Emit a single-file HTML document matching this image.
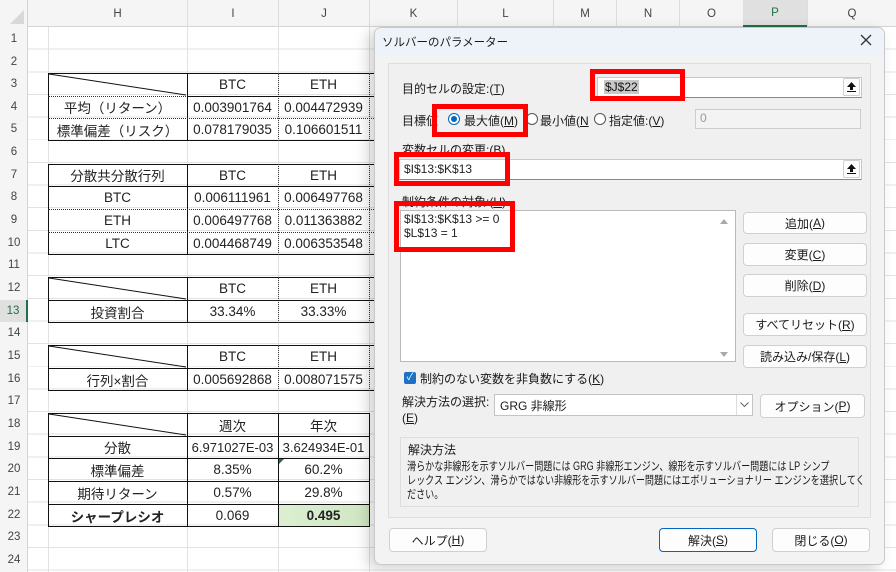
<!DOCTYPE html>
<html><head><meta charset="utf-8"><style>
*{box-sizing:border-box;margin:0;padding:0}
body{width:896px;height:572px;overflow:hidden;background:#fff;position:relative;font-family:"Liberation Sans","Noto Sans CJK JP",sans-serif;color:#222}
.a{position:absolute}
.c{position:absolute;display:flex;align-items:center;justify-content:center;font-size:13.5px;white-space:nowrap;color:#222}
.rh{position:absolute;left:0;width:28px;font-size:11.5px;color:#444;display:flex;align-items:center;justify-content:center}
.ch{position:absolute;top:0;height:27px;font-size:11.5px;color:#444;display:flex;align-items:center;justify-content:center}
.tb{position:absolute;border:1.5px solid #111}
.hl{position:absolute;height:0;border-top:1px solid #111}
.hd{position:absolute;height:0;border-top:1px dotted #333}
.vl{position:absolute;width:0;border-left:1px solid #111}
.vd{position:absolute;width:0;border-left:1px dotted #444}
.dl{font-size:12px;color:#1a1a1a;white-space:nowrap}
.btn{position:absolute;background:#fdfdfd;border:1px solid #d0d0d0;border-radius:4px;display:flex;align-items:center;justify-content:center;font-size:12px;color:#1a1a1a}
.inp{position:absolute;background:#fff;border:1px solid #c8c8c8;border-bottom:1px solid #888}
.red{position:absolute;border:5px solid #ff0000}
.u{text-decoration:underline}
.radio{position:absolute;width:12px;height:12px;border-radius:50%;border:1px solid #555;background:#fff}
</style></head><body>
<div class="a" style="left:28px;top:27px;width:868px;height:545px;background-image:repeating-linear-gradient(to bottom,transparent 0,transparent 21.65px,#e2e2e2 21.65px,#e2e2e2 22.65px)"></div>
<div class="a" style="left:48px;top:27px;width:1px;height:545px;background:#e2e2e2"></div>
<div class="a" style="left:187px;top:27px;width:1px;height:545px;background:#e2e2e2"></div>
<div class="a" style="left:278px;top:27px;width:1px;height:545px;background:#e2e2e2"></div>
<div class="a" style="left:369px;top:27px;width:1px;height:545px;background:#e2e2e2"></div>
<div class="a" style="left:0;top:0;width:896px;height:27px;background:#f5f5f5;border-bottom:1px solid #d4d4d4"></div>
<div class="a" style="left:0;top:0;width:28px;height:572px;background:#f5f5f5;border-right:1px solid #d4d4d4"></div>
<div class="a" style="left:10px;top:10px;width:0;height:0;border-left:14px solid transparent;border-bottom:14px solid #d8d8d8"></div>
<div class="ch" style="left:48px;width:139px">H</div>
<div class="ch" style="left:187px;width:91px;border-left:1px solid #ddd">I</div>
<div class="ch" style="left:278px;width:91px;border-left:1px solid #ddd">J</div>
<div class="ch" style="left:369px;width:88px;border-left:1px solid #ddd">K</div>
<div class="ch" style="left:457px;width:96px;border-left:1px solid #ddd">L</div>
<div class="ch" style="left:553px;width:63px;border-left:1px solid #ddd">M</div>
<div class="ch" style="left:616px;width:63px;border-left:1px solid #ddd">N</div>
<div class="ch" style="left:679px;width:64px;border-left:1px solid #ddd">O</div>
<div class="ch" style="left:743px;width:64px;background:#e0e0e0;border-bottom:2px solid #1e7145;color:#1e7145">P</div>
<div class="ch" style="left:807px;width:89px;border-left:1px solid #ddd">Q</div>
<div class="rh" style="top:28px;height:22px">1</div>
<div class="rh" style="top:51px;height:22px">2</div>
<div class="rh" style="top:73px;height:22px">3</div>
<div class="rh" style="top:96px;height:22px">4</div>
<div class="rh" style="top:118px;height:22px">5</div>
<div class="rh" style="top:141px;height:22px">6</div>
<div class="rh" style="top:164px;height:22px">7</div>
<div class="rh" style="top:186px;height:22px">8</div>
<div class="rh" style="top:209px;height:22px">9</div>
<div class="rh" style="top:232px;height:22px">10</div>
<div class="rh" style="top:254px;height:22px">11</div>
<div class="rh" style="top:277px;height:22px">12</div>
<div class="rh" style="top:300px;height:22px;background:#e0e0e0;color:#1e7145;border-right:2px solid #1e7145">13</div>
<div class="rh" style="top:322px;height:22px">14</div>
<div class="rh" style="top:345px;height:22px">15</div>
<div class="rh" style="top:368px;height:22px">16</div>
<div class="rh" style="top:390px;height:22px">17</div>
<div class="rh" style="top:413px;height:22px">18</div>
<div class="rh" style="top:436px;height:22px">19</div>
<div class="rh" style="top:458px;height:22px">20</div>
<div class="rh" style="top:481px;height:22px">21</div>
<div class="rh" style="top:504px;height:22px">22</div>
<div class="rh" style="top:526px;height:22px">23</div>
<div class="rh" style="top:549px;height:22px">24</div>

<svg class="a" style="left:0;top:0" width="380" height="572">
<g stroke="#111" stroke-width="1">
<line x1="49" y1="74" x2="186" y2="95"/>
<line x1="49" y1="278" x2="186" y2="299"/>
<line x1="49" y1="346" x2="186" y2="367"/>
<line x1="49" y1="414" x2="186" y2="435"/>
</g></svg>

<div class="tb" style="left:48px;top:73px;width:340px;height:68px"></div>
<div class="vl" style="left:187px;top:73px;height:68px"></div>
<div class="vd" style="left:278px;top:73px;height:68px"></div>
<div class="vd" style="left:369px;top:73px;height:68px"></div>
<div class="hd" style="left:48px;top:96px;width:140px"></div>
<div class="hl" style="left:187px;top:96px;width:200px"></div>
<div class="hd" style="left:48px;top:118px;width:330px"></div>
<div class="c" style="left:187px;top:73px;width:91px;height:23px">BTC</div>
<div class="c" style="left:278px;top:73px;width:91px;height:23px">ETH</div>
<div class="c" style="left:48px;top:96px;width:139px;height:22px">平均（リターン）</div>
<div class="c" style="left:187px;top:96px;width:91px;height:22px">0.003901764</div>
<div class="c" style="left:278px;top:96px;width:91px;height:22px">0.004472939</div>
<div class="c" style="left:48px;top:118px;width:139px;height:23px">標準偏差（リスク）</div>
<div class="c" style="left:187px;top:118px;width:91px;height:23px">0.078179035</div>
<div class="c" style="left:278px;top:118px;width:91px;height:23px">0.106601511</div>

<div class="tb" style="left:48px;top:164px;width:340px;height:91px"></div>
<div class="vl" style="left:187px;top:164px;height:91px"></div>
<div class="vd" style="left:278px;top:164px;height:91px"></div>
<div class="vd" style="left:369px;top:164px;height:91px"></div>
<div class="hl" style="left:48px;top:186px;width:340px"></div>
<div class="hd" style="left:48px;top:209px;width:330px"></div>
<div class="hd" style="left:48px;top:232px;width:330px"></div>
<div class="c" style="left:48px;top:164px;width:139px;height:22px">分散共分散行列</div>
<div class="c" style="left:187px;top:164px;width:91px;height:22px">BTC</div>
<div class="c" style="left:278px;top:164px;width:91px;height:22px">ETH</div>
<div class="c" style="left:48px;top:186px;width:139px;height:23px">BTC</div>
<div class="c" style="left:187px;top:186px;width:91px;height:23px">0.006111961</div>
<div class="c" style="left:278px;top:186px;width:91px;height:23px">0.006497768</div>
<div class="c" style="left:48px;top:209px;width:139px;height:23px">ETH</div>
<div class="c" style="left:187px;top:209px;width:91px;height:23px">0.006497768</div>
<div class="c" style="left:278px;top:209px;width:91px;height:23px">0.011363882</div>
<div class="c" style="left:48px;top:232px;width:139px;height:23px">LTC</div>
<div class="c" style="left:187px;top:232px;width:91px;height:23px">0.004468749</div>
<div class="c" style="left:278px;top:232px;width:91px;height:23px">0.006353548</div>

<div class="tb" style="left:48px;top:277px;width:340px;height:46px"></div>
<div class="vl" style="left:187px;top:277px;height:46px"></div>
<div class="vd" style="left:278px;top:277px;height:46px"></div>
<div class="vd" style="left:369px;top:277px;height:46px"></div>
<div class="hl" style="left:48px;top:300px;width:340px"></div>
<div class="c" style="left:187px;top:277px;width:91px;height:23px">BTC</div>
<div class="c" style="left:278px;top:277px;width:91px;height:23px">ETH</div>
<div class="c" style="left:48px;top:300px;width:139px;height:23px">投資割合</div>
<div class="c" style="left:187px;top:300px;width:91px;height:23px">33.34%</div>
<div class="c" style="left:278px;top:300px;width:91px;height:23px">33.33%</div>

<div class="tb" style="left:48px;top:345px;width:340px;height:46px"></div>
<div class="vl" style="left:187px;top:345px;height:46px"></div>
<div class="vd" style="left:278px;top:345px;height:46px"></div>
<div class="vd" style="left:369px;top:345px;height:46px"></div>
<div class="hl" style="left:48px;top:368px;width:340px"></div>
<div class="c" style="left:187px;top:345px;width:91px;height:23px">BTC</div>
<div class="c" style="left:278px;top:345px;width:91px;height:23px">ETH</div>
<div class="c" style="left:48px;top:368px;width:139px;height:23px">行列×割合</div>
<div class="c" style="left:187px;top:368px;width:91px;height:23px">0.005692868</div>
<div class="c" style="left:278px;top:368px;width:91px;height:23px">0.008071575</div>

<div class="a" style="left:278px;top:504px;width:91px;height:23px;background:linear-gradient(to right,#dcefd2,#cfe6c2)"></div>
<div class="tb" style="left:48px;top:413px;width:322px;height:114px"></div>
<div class="vl" style="left:187px;top:413px;height:114px"></div>
<div class="vl" style="left:278px;top:413px;height:114px"></div>
<div class="hl" style="left:48px;top:436px;width:322px"></div>
<div class="hl" style="left:48px;top:458px;width:322px"></div>
<div class="hl" style="left:48px;top:481px;width:322px"></div>
<div class="hl" style="left:48px;top:504px;width:322px"></div>
<div class="a" style="left:279px;top:459px;width:0;height:0;border-top:5px solid #1e7145;border-right:5px solid transparent"></div>
<div class="c" style="left:187px;top:413px;width:91px;height:23px">週次</div>
<div class="c" style="left:278px;top:413px;width:91px;height:23px">年次</div>
<div class="c" style="left:48px;top:436px;width:139px;height:22px">分散</div>
<div class="c" style="left:187px;top:436px;width:91px;height:22px;font-size:13px">6.971027E-03</div>
<div class="c" style="left:278px;top:436px;width:91px;height:22px;font-size:13px">3.624934E-01</div>
<div class="c" style="left:48px;top:458px;width:139px;height:23px">標準偏差</div>
<div class="c" style="left:187px;top:458px;width:91px;height:23px">8.35%</div>
<div class="c" style="left:278px;top:458px;width:91px;height:23px">60.2%</div>
<div class="c" style="left:48px;top:481px;width:139px;height:23px">期待リターン</div>
<div class="c" style="left:187px;top:481px;width:91px;height:23px">0.57%</div>
<div class="c" style="left:278px;top:481px;width:91px;height:23px">29.8%</div>
<div class="c" style="left:48px;top:504px;width:139px;height:23px;font-weight:bold">シャープレシオ</div>
<div class="c" style="left:187px;top:504px;width:91px;height:23px">0.069</div>
<div class="c" style="left:278px;top:504px;width:91px;height:23px;font-weight:bold">0.495</div>

<!-- Dialog -->
<div class="a" style="left:374px;top:27px;width:511px;height:538px;background:#f3f3f3;border:1px solid #c9c9c9;border-radius:7px;box-shadow:-6px 4px 14px rgba(0,0,0,0.18);overflow:hidden">
  <div class="a" style="left:0;top:0;width:511px;height:27px;background:#eef3f9"></div>
</div>
<div class="a" style="left:382px;top:34px;font-size:11.5px;color:#1a1a1a">ソルバーのパラメーター</div>
<svg class="a" style="left:860px;top:34px" width="12" height="12"><path d="M1 1L11 11M11 1L1 11" stroke="#333" stroke-width="1.3"/></svg>
<div class="a" style="left:388px;top:63px;width:483px;height:455px;background:#f0f0f0;border:1px solid #dedede"></div>

<div class="a dl" style="left:402px;top:80px">目的セルの設定:(<span class="u">T</span>)</div>
<div class="inp" style="left:597px;top:77px;width:265px;height:21px"></div>
<div class="a" style="left:604px;top:80px;font-size:12px;background:#c8c8c8;padding:0 1px;color:#111">$J$22</div>
<div class="btn" style="left:843px;top:78px;width:17px;height:18px;border-radius:2px"><svg width="9" height="10"><path d="M4.5 0L0 5H3V8H6V5H9Z" fill="#111"/><rect x="0" y="9" width="9" height="1" fill="#111"/></svg></div>
<div class="red" style="left:590px;top:69px;width:95px;height:32px"></div>

<div class="a dl" style="left:402px;top:112px">目標値</div>
<div class="radio" style="left:448px;top:113px;border:1px solid #0067c0"></div>
<div class="a" style="left:451px;top:116px;width:6px;height:6px;border-radius:50%;background:#0067c0"></div>
<div class="a dl" style="left:464px;top:112px">最大値(<span class="u">M</span>)</div>
<div class="radio" style="left:526px;top:113px"></div>
<div class="a dl" style="left:540px;top:112px">最小値(<span class="u">N</span></div>
<div class="radio" style="left:594px;top:113px"></div>
<div class="a dl" style="left:609px;top:112px">指定値:(<span class="u">V</span>)</div>
<div class="a" style="left:695px;top:109px;width:166px;height:20px;background:#f3f3f3;border:1px solid #ccc"></div>
<div class="a" style="left:700px;top:111px;font-size:12px;color:#999">0</div>
<div class="red" style="left:432px;top:104px;width:96px;height:33px"></div>

<div class="a dl" style="left:402px;top:141px">変数セルの変更:(<span class="u">B</span>)</div>
<div class="inp" style="left:399px;top:159px;width:463px;height:21px"></div>
<div class="a" style="left:404px;top:162px;font-size:12px">$I$13:$K$13</div>
<div class="btn" style="left:843px;top:160px;width:17px;height:18px;border-radius:2px"><svg width="9" height="10"><path d="M4.5 0L0 5H3V8H6V5H9Z" fill="#111"/><rect x="0" y="9" width="9" height="1" fill="#111"/></svg></div>
<div class="red" style="left:394px;top:152px;width:116px;height:34px"></div>

<div class="a dl" style="left:402px;top:193px">制約条件の対象:(<span class="u">U</span>)</div>
<div class="a" style="left:400px;top:210px;width:336px;height:152px;background:#fff;border:1px solid #bbb"></div>
<div class="a" style="left:720px;top:219px;width:0;height:0;border-left:4px solid transparent;border-right:4px solid transparent;border-bottom:5px solid #aaa"></div>
<div class="a" style="left:720px;top:352px;width:0;height:0;border-left:4px solid transparent;border-right:4px solid transparent;border-top:5px solid #aaa"></div>
<div class="a" style="left:404px;top:212px;font-size:12px;line-height:14px">$I$13:$K$13 &gt;= 0<br>$L$13 = 1</div>
<div class="red" style="left:394px;top:201px;width:121px;height:51px"></div>

<div class="btn" style="left:743px;top:212px;width:124px;height:22px">追加(<span class="u">A</span>)</div>
<div class="btn" style="left:743px;top:243px;width:124px;height:23px">変更(<span class="u">C</span>)</div>
<div class="btn" style="left:743px;top:274px;width:124px;height:23px">削除(<span class="u">D</span>)</div>
<div class="btn" style="left:743px;top:313px;width:124px;height:23px">すべてリセット(<span class="u">R</span>)</div>
<div class="btn" style="left:743px;top:345px;width:124px;height:23px">読み込み/保存(<span class="u">L</span>)</div>

<div class="a" style="left:404px;top:372px;width:12px;height:12px;border-radius:2px;background:#1f6fc5;color:#fff;font-size:10px;line-height:12px;text-align:center">✓</div>
<div class="a dl" style="left:420px;top:370px">制約のない変数を非負数にする(<span class="u">K</span>)</div>

<div class="a dl" style="left:402px;top:394px;line-height:16px">解決方法の選択:<br>(<span class="u">E</span>)</div>
<div class="a" style="left:494px;top:394px;width:259px;height:22px;background:#fff;border:1px solid #c4c4c4"></div>
<div class="a dl" style="left:500px;top:397px">GRG 非線形</div>
<div class="a" style="left:736px;top:395px;width:1px;height:20px;background:#ddd"></div>
<svg class="a" style="left:740px;top:402px" width="9" height="6"><path d="M0.5 0.5L4.5 4.5L8.5 0.5" stroke="#666" fill="none"/></svg>
<div class="btn" style="left:760px;top:394px;width:105px;height:24px">オプション(<span class="u">P</span>)</div>

<div class="a" style="left:400px;top:437px;width:459px;height:70px;border:1px solid #ddd"></div>
<div class="a dl" style="left:408px;top:441px">解決方法</div>
<div class="a" style="left:407px;top:460px;font-size:11.5px;line-height:14px;color:#1a1a1a;white-space:nowrap;transform:scaleX(0.79);transform-origin:0 0">滑らかな非線形を示すソルバー問題には GRG 非線形エンジン、線形を示すソルバー問題には LP シンプ<br>レックス エンジン、滑らかではない非線形を示すソルバー問題にはエボリューショナリー エンジンを選択してく<br>ださい。</div>

<div class="btn" style="left:389px;top:528px;width:98px;height:24px">ヘルプ(<span class="u">H</span>)</div>
<div class="btn" style="left:659px;top:528px;width:98px;height:24px;border:1px solid #0067c0">解決(<span class="u">S</span>)</div>
<div class="btn" style="left:772px;top:528px;width:98px;height:24px">閉じる(<span class="u">O</span>)</div>
</body></html>
